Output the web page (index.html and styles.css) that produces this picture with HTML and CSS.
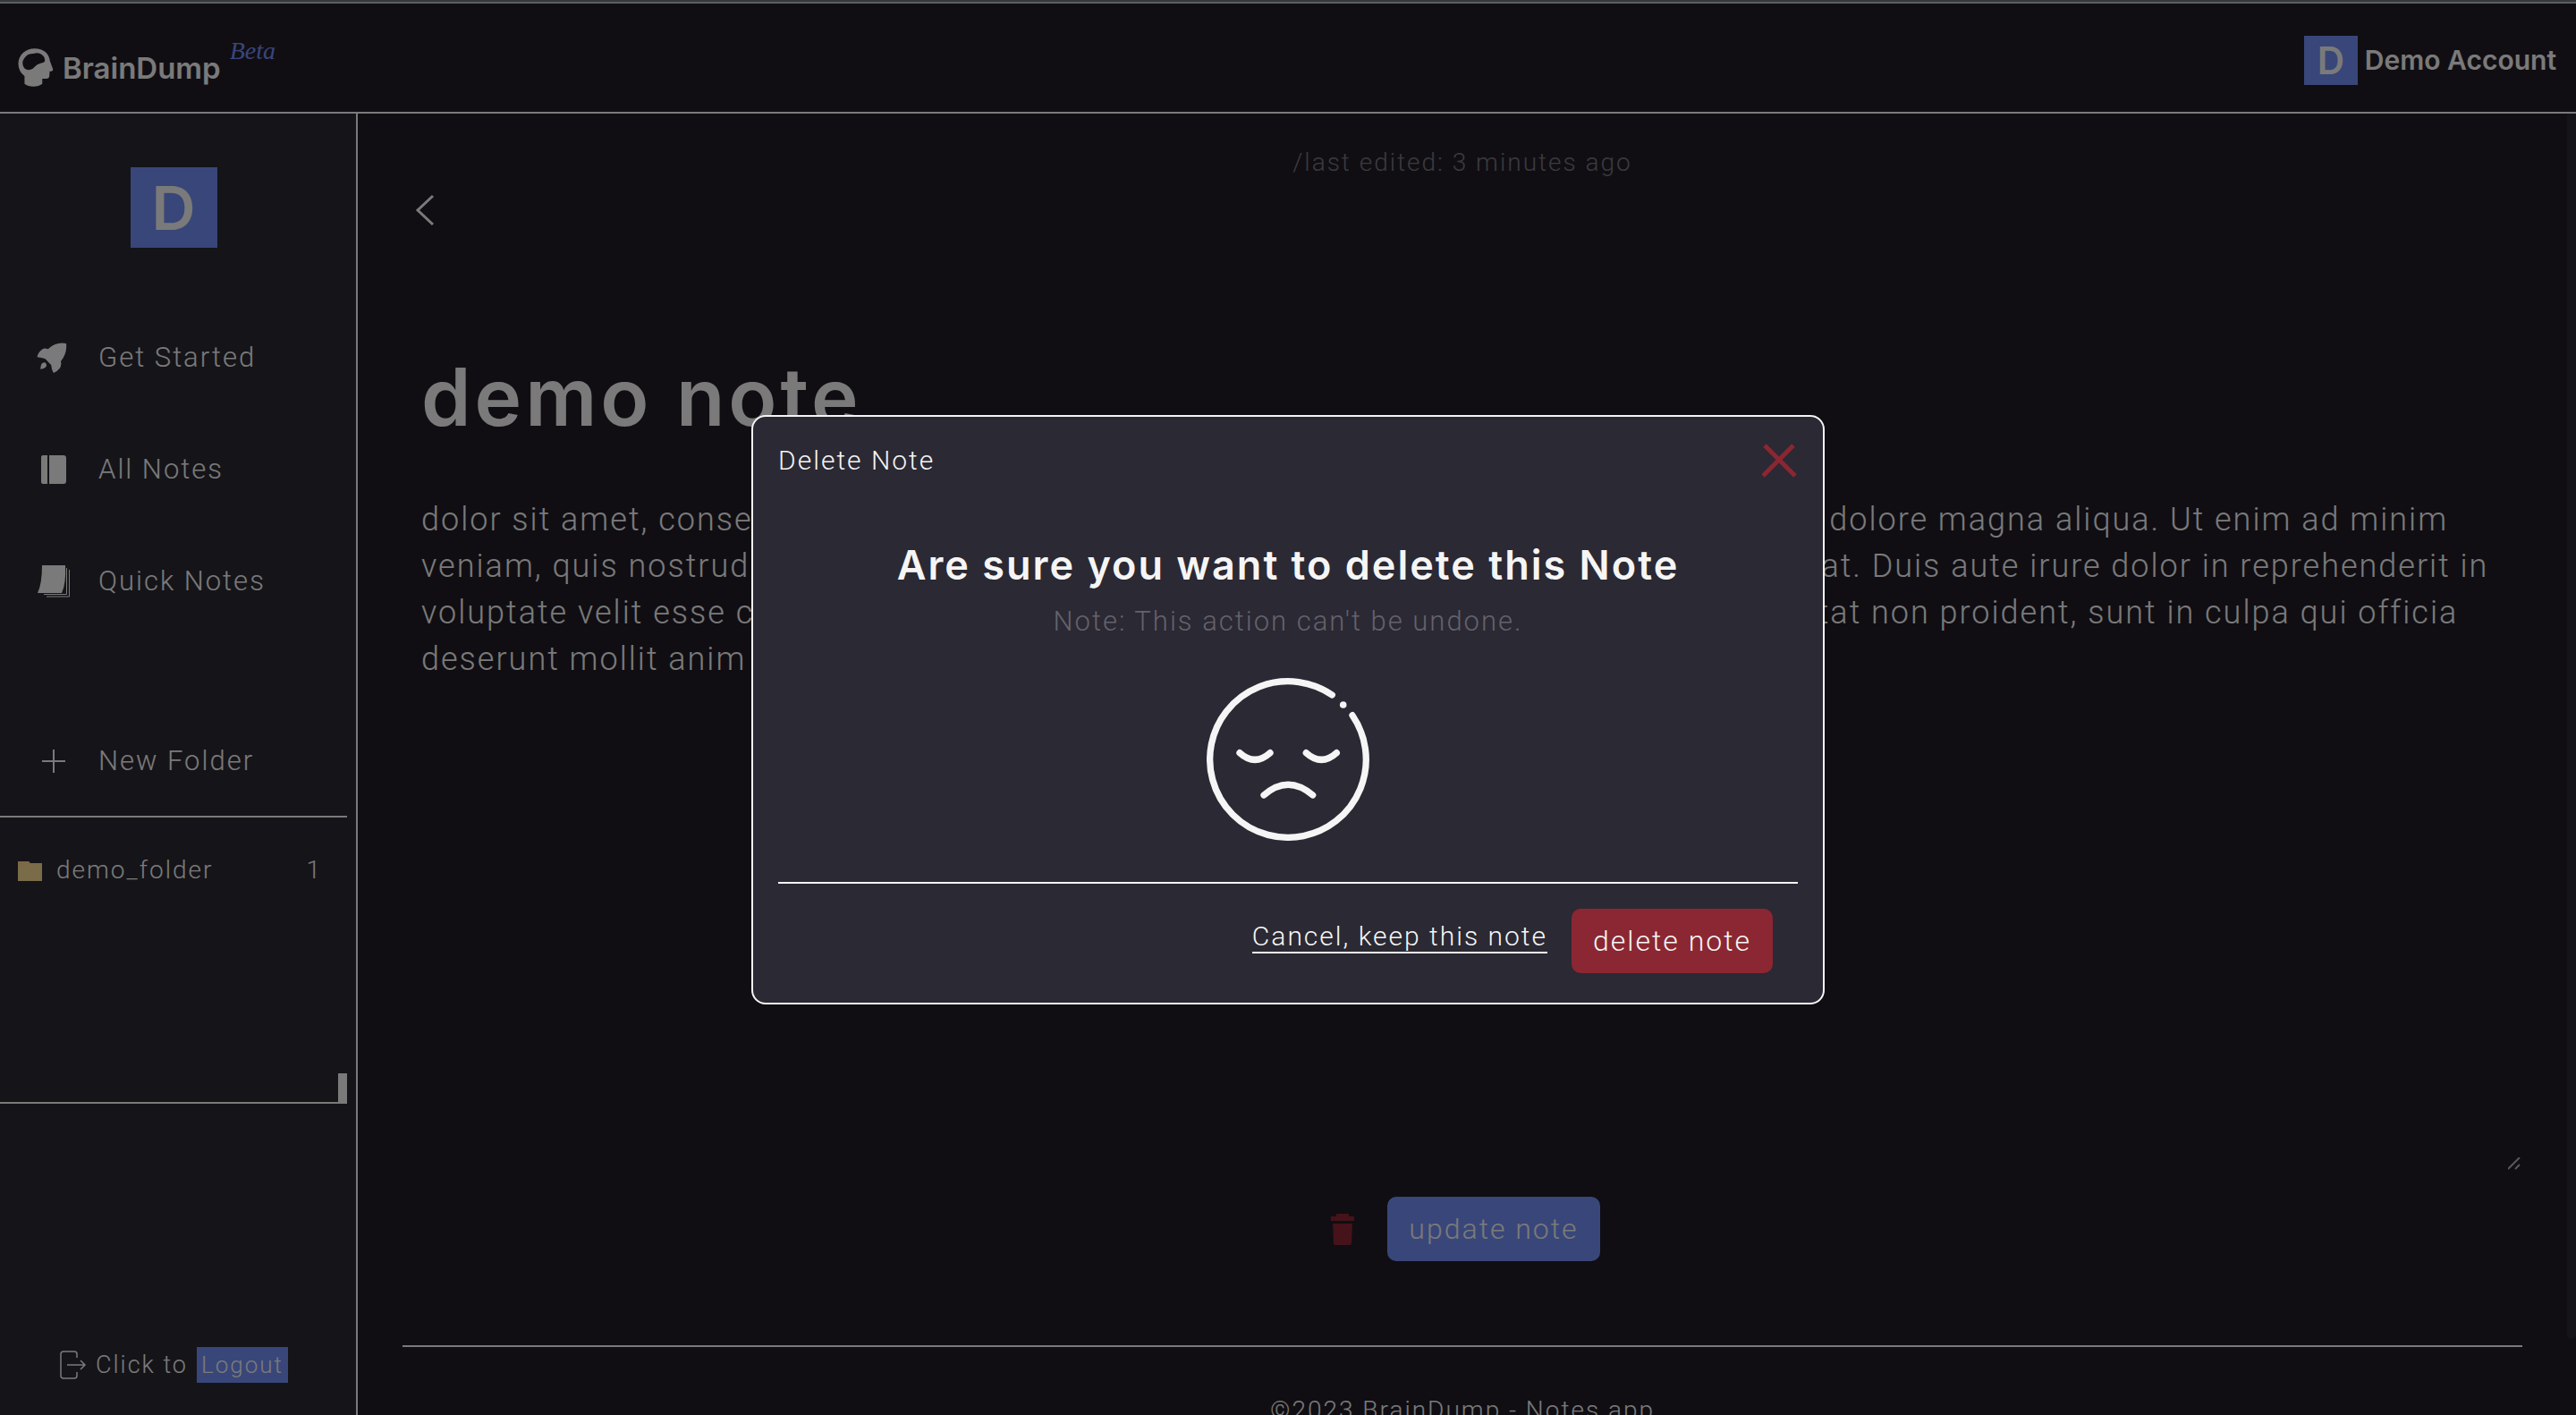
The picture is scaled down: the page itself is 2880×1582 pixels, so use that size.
FILE: index.html
```html
<!DOCTYPE html>
<html lang="en">
<head>
<meta charset="utf-8">
<title>BrainDump</title>
<link rel="stylesheet" href="styles.css">
</head>
<body>
<header class="topbar">
  <a class="brand" href="#">
    <svg class="brand-icon" viewBox="62 162 120 130" aria-hidden="true"><path fill="currentColor" fill-rule="evenodd" d="M118 163C148 163 167 180 170 205L180 232Q181 240 169 240L168 255Q167 265 157 265L144 265L144 282Q132 291 114 291Q95 291 84 282L84 256Q63 240 63 214C63 185 88 163 118 163ZM114 180Q98 179 88 190Q75 203 78 217Q82 235 98 235Q110 235 118 225Q126 216 138 213Q152 211 153 203Q153 188 137 180Q126 176 114 180Z"/></svg>
    <span class="brand-name">BrainDump</span>
    <span class="beta">Beta</span>
  </a>
  <a class="account" href="#"><span class="avatar">D</span><span>Demo Account</span></a>
</header>

<div class="layout">
  <aside class="sidebar">
    <span class="avatar avatar-large">D</span>
    <nav class="nav">
      <a href="#"><svg viewBox="122 127 102 102" aria-hidden="true"><path fill="currentColor" d="M221 130Q225 162 203 190Q209 214 180 228L177 227Q171 215 171 203L151 182Q140 178 124 176Q125 160 143 148Q150 145 160 149Q185 124 221 130ZM150 194Q158 200 153 209Q147 216 135 216Q134 203 140 197Q146 192 150 194Z"/></svg>Get Started</a>
      <a href="#"><svg viewBox="0 0 34 34" aria-hidden="true"><path fill="currentColor" d="M7 1H12V33H7Q5 33 5 31V3Q5 1 7 1ZM14 1H30Q33 1 33 4V30Q33 33 30 33H14Z"/></svg>All Notes</a>
      <a href="#"><svg viewBox="0 0 34 34" overflow="visible" aria-hidden="true"><path fill="currentColor" d="M6-1H32Q33 20 28 30H1Q6 20 6-1Z"/><path fill="none" stroke="currentColor" d="M33.500 2V31.500H8M36.500 4V34H11"/></svg>Quick Notes</a>
    </nav>
    <button class="new-folder" type="button"><svg viewBox="0 0 34 34" aria-hidden="true"><path stroke="currentColor" stroke-width="2" d="M6 17H32M19 4V30"/></svg>New Folder</button>
    <div class="folders">
      <a href="#"><svg viewBox="0 0 27 23" aria-hidden="true"><path fill="#fed08a" d="M0 1H12L14 3V8H0Z"/><path fill="#f4d890" d="M0 6H10L13 3H27V23H0Z"/></svg><span>demo_folder</span><span class="count">1</span></a>
      <span class="thumb"></span>
    </div>
    <div class="logout">
      <svg viewBox="0 0 30 32" aria-hidden="true"><path fill="none" stroke="currentColor" stroke-width="1.500" d="M19 8V4Q19 1 16 1H4Q1 1 1 4V28Q1 31 4 31H16Q19 31 19 28V24M8 16H28M23 11L28 16L23 21"/></svg>
      <span>Click to</span><button type="button">Logout</button>
    </div>
  </aside>

  <main class="main">
    <p class="edited">/last edited: 3 minutes ago</p>
    <button class="back" type="button" aria-label="Back"><svg viewBox="0 0 22 36" aria-hidden="true"><path fill="none" stroke="currentColor" stroke-width="3" d="M20 2L3 18L20 34"/></svg></button>
    <input class="title" aria-label="Title" value="demo note">
    <div class="editor">
      <textarea aria-label="Note">dolor sit amet, consectetur adipiscing elit, sed do eiusmod tempor incididunt ut labore et dolore magna aliqua. Ut enim ad minim veniam, quis nostrud exercitation ullamco laboris nisi ut aliquip ex ea commodo consequat. Duis aute irure dolor in reprehenderit in voluptate velit esse cillum dolore eu fugiat nulla pariatur. Excepteur sint occaecat cupidatat non proident, sunt in culpa qui officia deserunt mollit anim id est laborum.</textarea>
      <svg class="grip" viewBox="0 0 14 14" aria-hidden="true"><path stroke="currentColor" stroke-width="2" d="M0 13L13 0M8 13L13 8"/></svg>
    </div>
    <div class="actions">
      <button class="trash" type="button" aria-label="Delete"><svg viewBox="0 0 26 35" aria-hidden="true"><path fill="currentColor" d="M0 3H6V0H20V3H26V8H0ZM2 11H24L23 33Q23 35 21 35H5Q3 35 3 33Z"/></svg></button>
      <button class="btn btn-blue" type="button">update note</button>
    </div>
    <footer class="footer">©2023 BrainDump - Notes app</footer>
    <span class="page-thumb"></span>
  </main>
</div>

<div class="backdrop">
  <section class="modal" role="dialog" aria-modal="true" aria-labelledby="modal-title">
    <div class="modal-head">
      <span id="modal-title">Delete Note</span>
      <button class="close" type="button" aria-label="Close"><svg viewBox="0 0 40 38" aria-hidden="true"><path stroke="currentColor" stroke-width="5" d="M3 2L37 36M35 2L1 36"/></svg></button>
    </div>
    <h2>Are sure you want to delete this Note</h2>
    <p class="warning">Note: This action can't be undone.</p>
    <svg class="face" viewBox="0 0 182 182" aria-hidden="true"><g fill="none" stroke="currentColor" stroke-width="7.300" stroke-linecap="round"><path d="M140.300 19A87.300 87.300 0 1 0 163 41.700"/><path d="M37 83.700Q54 99 71 83.700M111.300 83.700Q128.300 99 145.300 83.700M64 131Q91 107.500 118.700 131"/></g><circle cx="152.700" cy="30" r="3.800" fill="currentColor"/></svg>
    <div class="modal-foot">
      <a href="#">Cancel, keep this note</a>
      <button class="btn btn-red" type="button">delete note</button>
    </div>
  </section>
</div>
</body>
</html>
```
FILE: styles.css
```css
* { box-sizing: border-box; }

:root {
  --ink: #f5f5f5;
  --page: #201d27;
  --panel: #2b2933;
  --blue: #728cf2;
  --red: #8a2732;
}

body {
  margin: 0;
  height: 100vh;
  overflow: hidden;
  display: flex;
  flex-direction: column;
  background: var(--page);
  color: var(--ink);
  font: 300 28px/34px Roboto, sans-serif;
  letter-spacing: 2px;
}

a { color: inherit; text-decoration: none; }
p, h2 { margin: 0; }
svg { display: block; flex: none; }

button, input, textarea {
  margin: 0;
  padding: 0;
  border: 0;
  background: none;
  color: inherit;
  font: inherit;
  letter-spacing: inherit;
}

/* Top bar */
.topbar {
  flex: none;
  height: 127px;
  padding: 38px 22px 0 20px;
  display: flex;
  justify-content: space-between;
  align-items: flex-start;
  border-top: 2px solid #66727a;
  border-bottom: 2px solid var(--ink);
  box-shadow: inset 0 2px #bebac0;
  font-family: Inter, sans-serif;
  font-weight: 600;
  letter-spacing: 0;
}
.brand { display: flex; padding-top: 14px; }
.brand-icon { width: 40px; height: 43px; }
.brand-name { margin-left: 10px; font-size: 33px; line-height: 44px; }
.beta {
  margin: -14px 0 0 10px;
  color: var(--blue);
  font: italic 28px/34px "Liberation Serif", serif;
}
.account { display: flex; gap: 8px; font-size: 30px; line-height: 54px; }
.avatar {
  width: 60px;
  background: var(--blue);
  font: 600 42px/55px Inter, sans-serif;
  letter-spacing: 0;
  text-align: center;
}

.layout { flex: 1; min-height: 0; display: flex; }

/* Sidebar */
.sidebar {
  flex: none;
  width: 400px;
  padding: 60px 10px 36px 0;
  display: flex;
  flex-direction: column;
  background: var(--panel);
  border-right: 2px solid var(--ink);
}
.avatar-large { align-self: center; width: 97px; font-size: 68px; line-height: 90px; }
.nav { margin-top: 60px; font-size: 31px; }
.nav a, .new-folder {
  display: flex;
  align-items: center;
  gap: 35px;
  height: 125px;
  padding-left: 41px;
}
.nav svg, .new-folder svg { width: 34px; height: 34px; }
.new-folder { height: 123px; margin-top: 77px; font-size: 31px; }
.folders {
  position: relative;
  height: 322px;
  padding-top: 42px;
  border-top: 2px solid var(--ink);
  border-bottom: 2px solid var(--ink);
}
.folders a { display: flex; align-items: center; padding: 0 20px; }
.folders svg { width: 27px; height: 23px; margin-right: 16px; }
.count { margin-left: auto; margin-right: 8px; }
.thumb {
  position: absolute;
  right: 0;
  bottom: 0;
  width: 10px;
  height: 32px;
  background: var(--ink);
}
.logout { margin-top: auto; padding-left: 67px; display: flex; align-items: center; font-size: 27px; }
.logout svg { width: 30px; height: 32px; }
.logout span { margin: 0 10px; }
.logout button { height: 40px; padding: 0 5px; background: var(--blue); font-size: 26px; }

/* Note editor */
.main {
  position: relative;
  flex: 1;
  min-width: 0;
  padding: 38px 60px 0 50px;
  display: flex;
  flex-direction: column;
}
.edited { text-align: center; color: #77757c; }
.back { align-self: flex-start; margin-top: 18px; padding-left: 14px; }
.back svg { width: 22px; height: 36px; }
.title {
  width: 100%;
  height: 120px;
  margin-top: 131px;
  padding: 0 21px;
  font: 600 89px/120px Inter, sans-serif;
  letter-spacing: 4px;
}
.editor { position: relative; flex: none; height: 49vh; margin-top: 31px; }
.editor textarea {
  display: block;
  width: 100%;
  height: 100%;
  padding: 20px 21px;
  resize: none;
  font-size: 36px;
  line-height: 52px;
}
.grip { position: absolute; right: 2px; bottom: 2px; width: 14px; height: 14px; color: #b0b0b0; }
.actions { display: flex; justify-content: center; align-items: center; gap: 30px; margin-top: 28px; }
.trash { padding: 0 7px; color: var(--red); }
.trash svg { width: 26px; height: 35px; }
.btn {
  height: 72px;
  padding: 0 24px;
  border-radius: 10px;
  font-size: 32px;
}
.btn-blue { background: var(--blue); }
.btn-red { background: var(--red); }
.footer {
  margin-top: 94px;
  padding-top: 54px;
  border-top: 2px solid var(--ink);
  text-align: center;
}
.page-thumb {
  position: absolute;
  top: 0;
  right: 0;
  bottom: 85px;
  width: 10px;
  border-radius: 0 0 5px 5px;
  background: var(--panel);
}

/* Delete dialog */
.backdrop {
  position: fixed;
  inset: 0;
  padding-top: 4px;
  display: flex;
  align-items: center;
  justify-content: center;
  background: rgba(0, 0, 0, .5);
}
.modal {
  width: 1200px;
  max-width: 90%;
  padding: 30px 28px 28px;
  display: flex;
  flex-direction: column;
  align-items: center;
  background: var(--panel);
  border: 2px solid var(--ink);
  border-radius: 16px;
}
.modal-head {
  align-self: stretch;
  display: flex;
  justify-content: space-between;
  align-items: center;
  font-size: 30px;
}
.close { color: var(--red); }
.close svg { width: 40px; height: 38px; }
.modal h2 {
  margin-top: 70px;
  font: 600 45px/56px Inter, sans-serif;
  letter-spacing: 2px;
}
.warning { margin-top: 18px; color: #64626c; font-size: 31px; }
.face { width: 182px; height: 182px; margin: 46px 0; }
.modal-foot {
  align-self: stretch;
  display: flex;
  justify-content: flex-end;
  align-items: flex-start;
  gap: 27px;
  padding: 28px 28px 5px;
  border-top: 2px solid var(--ink);
  font-size: 30px;
}
.modal-foot a { margin-top: 14px; border-bottom: 2px solid var(--ink); }
```
